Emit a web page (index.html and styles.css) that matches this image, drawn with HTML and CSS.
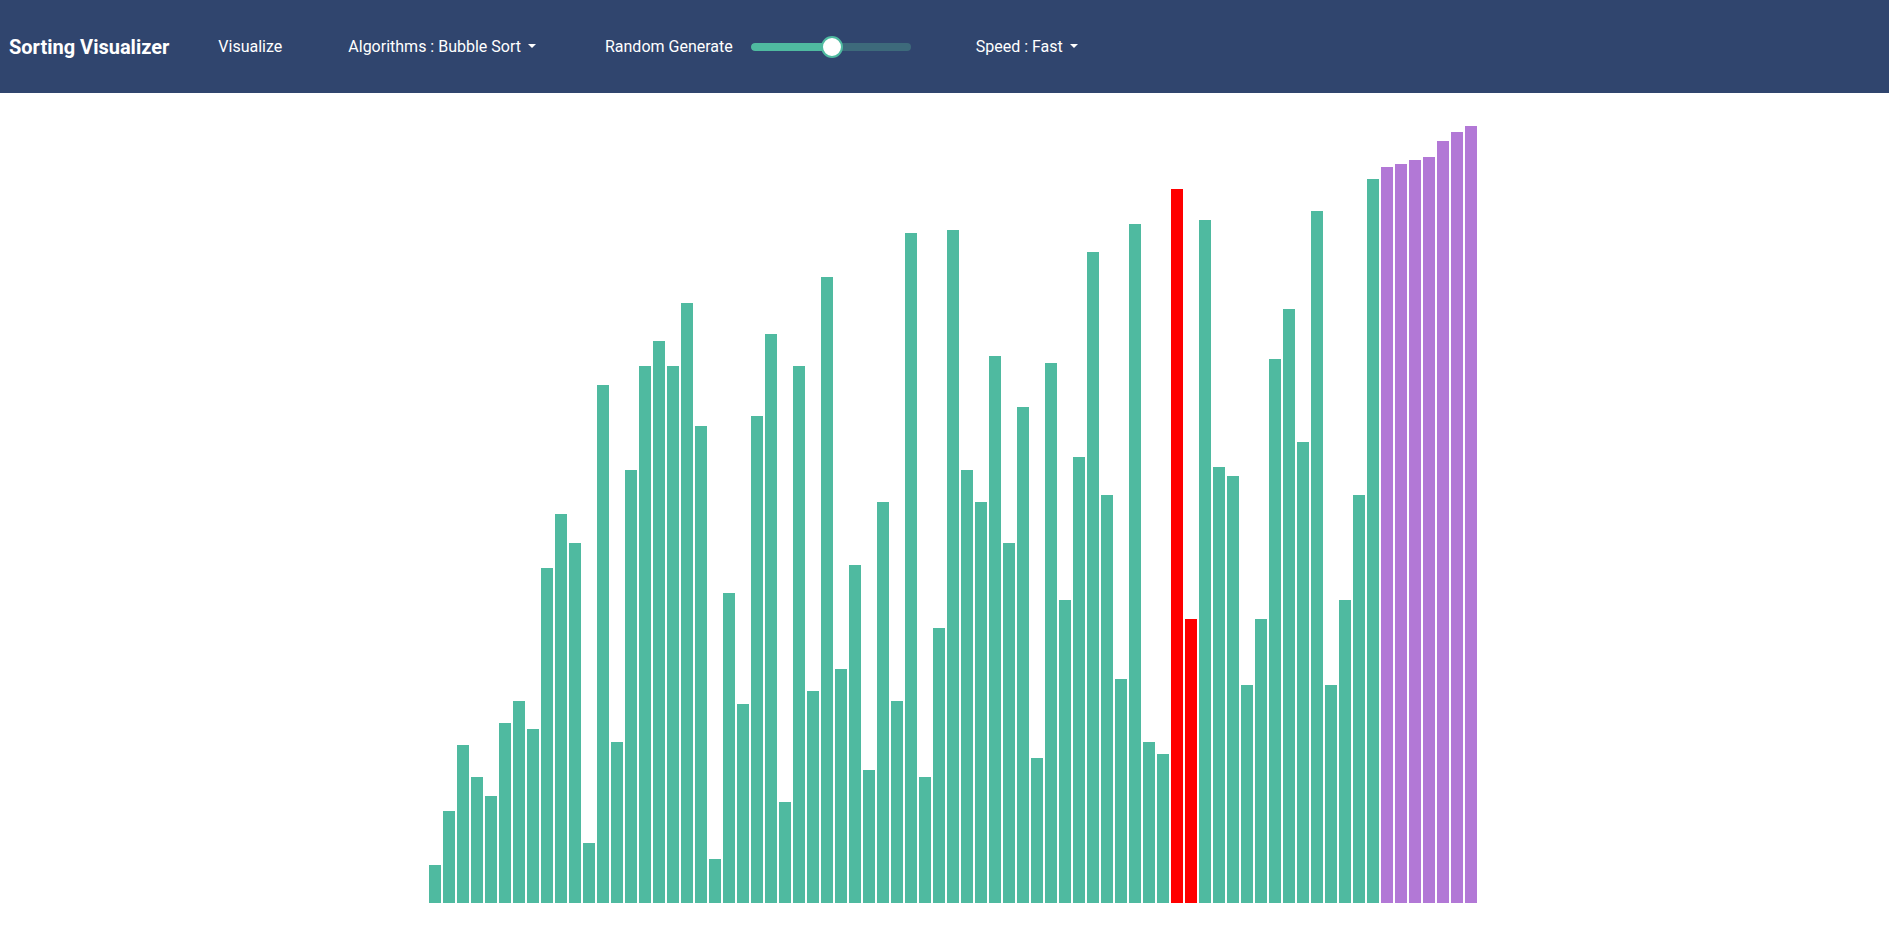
FILE: index.html
```html
<!DOCTYPE html>
<html lang="en">
<head>
<meta charset="utf-8">
<title>Sorting Visualizer</title>
<link rel="stylesheet" href="styles.css">
</head>
<body>
<nav class="navbar">
  <span class="brand">Sorting Visualizer</span>
  <span class="nav-link visualize">Visualize</span>
  <span class="nav-link dropdown algos">Algorithms : Bubble Sort</span>
  <span class="nav-link random">Random Generate</span>
  <div class="slider">
    <div class="track"><div class="fill" style="width:51%"></div></div>
    <div class="thumb" style="left:51%"></div>
  </div>
  <span class="nav-link dropdown speed">Speed : Fast</span>
</nav>
<main class="chart" id="chart"></main>
<script src="app.js"></script>
</body>
</html>
```
FILE: styles.css
```css
* { box-sizing: border-box; }
html, body { margin: 0; padding: 0; background: #ffffff; }
body { font-family: Roboto, "Noto Sans", "Liberation Sans", sans-serif; }

.navbar {
  height: 93px;
  background: #30456e;
  display: flex;
  align-items: center;
  padding-left: 9px;
  color: #ffffff;
}
.brand {
  font-size: 20px;
  font-weight: 700;
}
.nav-link {
  font-size: 16px;
  font-weight: 400;
}
.visualize { margin-left: 49px; }
.algos { margin-left: 66px; }
.random { margin-left: 69px; }
.speed { margin-left: 65px; }

.dropdown::after {
  content: "";
  display: inline-block;
  margin-left: 7px;
  vertical-align: 0.255em;
  border-top: 0.3em solid #ffffff;
  border-left: 0.3em solid transparent;
  border-right: 0.3em solid transparent;
}

.slider {
  position: relative;
  width: 160px;
  height: 24px;
  margin-left: 18px;
  display: flex;
  align-items: center;
}
.track {
  width: 100%;
  height: 8px;
  border-radius: 4px;
  background: #3d6a7b;
  overflow: hidden;
}
.fill {
  height: 100%;
  background: #4fbaa0;
  border-radius: 4px;
}
.thumb {
  position: absolute;
  top: 1px;
  width: 22px;
  height: 22px;
  margin-left: -11px;
  border-radius: 50%;
  background: #ffffff;
  border: 2px solid #4fbaa0;
}

.chart {
  height: 810px;
  display: flex;
  align-items: flex-end;
  justify-content: center;
  padding-left: 17px;
}
.bar {
  width: 12px;
  margin: 0 1px;
  background: #4fbaa0;
}
.bar.compare { background: #ff0000; }
.bar.sorted { background: #b278d6; }
```
FILE: app.js
```js
var heights = [38,92,158,126,107,180,202,174,335,389,360,60,518,161,433,537,562,537,600,477,
44,310,199,487,569,101,537,212,626,234,338,133,401,202,670,126,275,673,433,401,
547,360,496,145,540,303,446,651,408,224,679,161,149,714,284,683,436,427,218,284,
544,594,461,692,218,303,408,724,736,739,743,746,762,771,777];
var chart = document.getElementById('chart');
heights.forEach(function (h, i) {
  var d = document.createElement('div');
  d.className = 'bar';
  if (i === 53 || i === 54) d.className += ' compare';
  if (i >= 68) d.className += ' sorted';
  d.style.height = h + 'px';
  chart.appendChild(d);
});
```
